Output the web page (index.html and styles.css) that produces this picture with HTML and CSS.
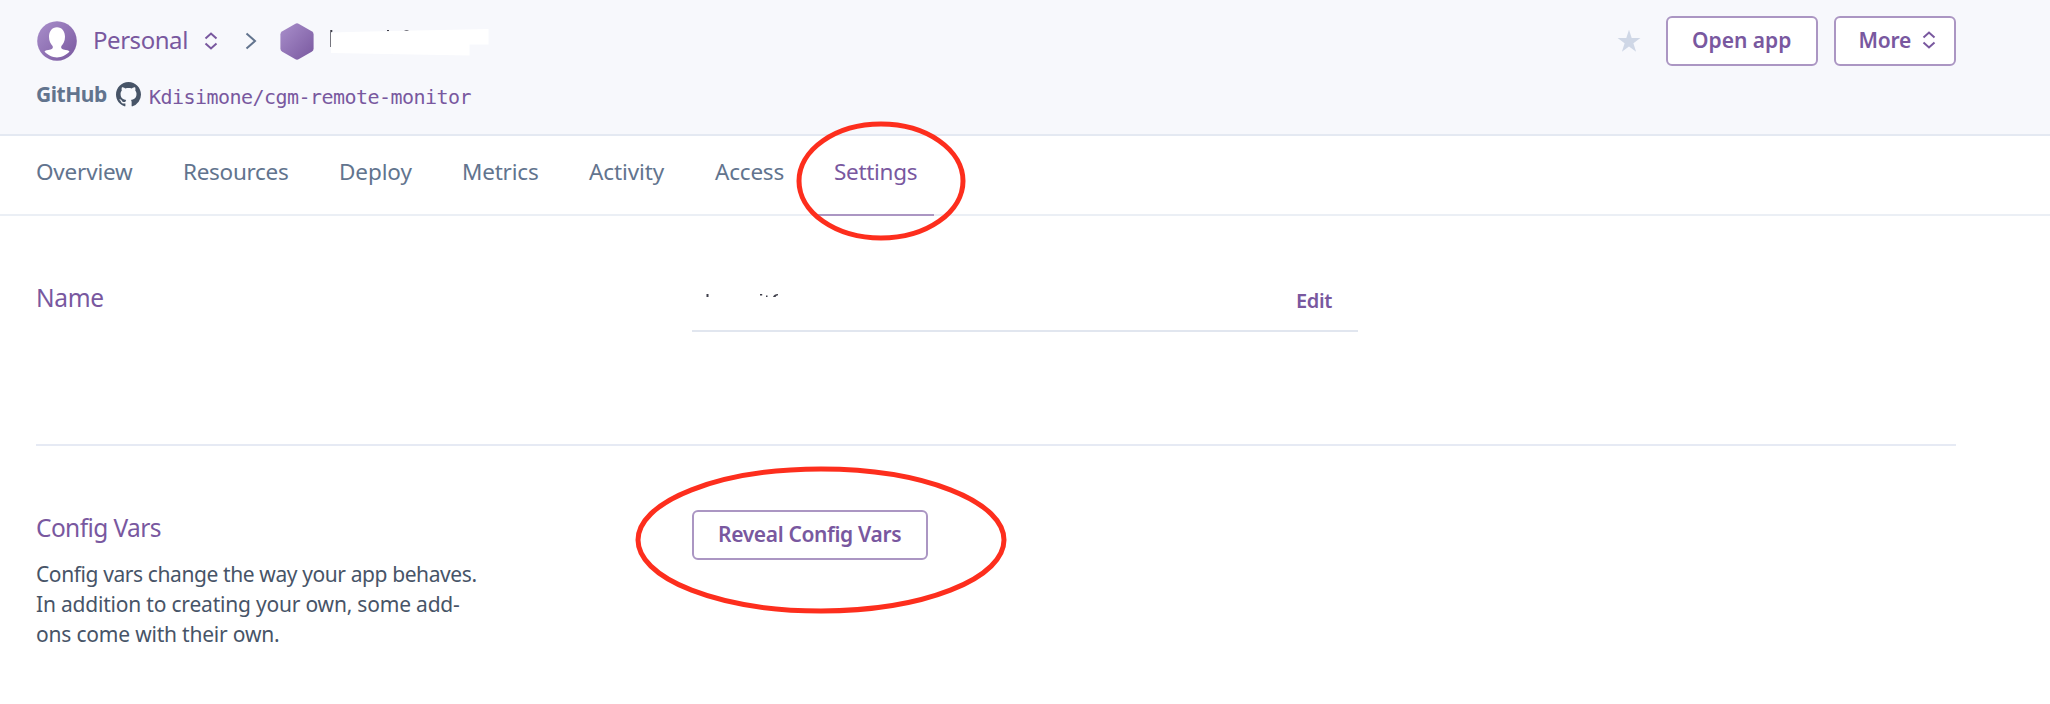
FILE: index.html
```html
<!DOCTYPE html>
<html lang="en">
<head>
<meta charset="utf-8">
<title>Settings</title>
<link rel="stylesheet" href="styles.css">
</head>
<body>
<header class="header">
  <div class="header-top">
    <svg class="avatar" width="40" height="40" viewBox="0 0 40 40">
      <defs><linearGradient id="g" x1="0" y1="0" x2="1" y2="1"><stop offset="0" stop-color="#a98fcb"/><stop offset="1" stop-color="#79589f"/></linearGradient></defs>
      <circle cx="20" cy="20" r="19.8" fill="url(#g)"/>
      <path d="M20 6.2c5 0 8 4.200 8 9.600 0 4.200-1.700 7.400-3.600 9.200-.8 1.900.2 3 2 3.500 3.500.6 5.200.9 6.100 2.100C29.800 34 24.500 36.500 20 36.500S10.200 34 7.500 30.600c.9-1.200 2.600-1.500 6.100-2.100 1.800-.5 2.800-1.600 2-3.500-1.900-1.800-3.600-5-3.600-9.200 0-5.400 3-9.600 8-9.600z" fill="#fff"/>
    </svg>
    <span class="team">Personal</span>
    <svg class="sort" width="14" height="18" viewBox="0 0 14 18"><path d="M1.500 6.500 7 1.500l5.500 5M1.500 11.500l5.500 5 5.500-5"/></svg>
    <svg class="crumb" width="12" height="18" viewBox="0 0 12 18"><path d="M1.500 1.500 10 9l-8.500 7.500"/></svg>
    <svg class="hex" width="34" height="37" viewBox="0 0 34 37"><path d="M15 .9q2-1.100 4 0l12.700 7.300q1.900 1.100 1.900 3.300v14q0 2.200-1.900 3.300L19 36.100q-2 1.100-4 0L2.300 28.800Q.4 27.700.4 25.500v-14Q.4 9.300 2.300 8.200z" fill="url(#g)"/></svg>
    <svg class="redacted" width="160" height="30" viewBox="0 0 160 30"><path d="M.3 4h2v2h-1v15h-1zM57 4h2v1.500h-2zM74 5q3-2 5 0z" fill="#3f3f4a"/><path d="M1 6.500 40 5.500 158.500 3v15.500h-19v11L1 27z" fill="#fff"/></svg>
    <div class="actions">
      <svg class="star" width="24" height="24" viewBox="0 0 24 24"><path d="M12 .8l2.700 8.300h8.700l-7 5.200 2.700 8.500-7.100-5.200-7.100 5.200 2.700-8.500-7-5.200h8.700z" fill="#cfd7e6"/></svg>
      <button class="btn open">Open app</button>
      <button class="btn more"><span>More</span><svg class="sort" width="14" height="18" viewBox="0 0 14 18"><path d="M1.500 6.500 7 1.500l5.500 5M1.500 11.500l5.500 5 5.500-5"/></svg></button>
    </div>
  </div>
  <div class="repo">
    <span class="repo-label">GitHub</span>
    <svg class="octocat" width="25" height="25" viewBox="0 0 16 16"><path fill="#475467" d="M8 0C3.580 0 0 3.580 0 8c0 3.540 2.290 6.530 5.470 7.590.4.070.55-.17.55-.38 0-.19-.01-.82-.01-1.490-2.010.37-2.530-.49-2.690-.94-.09-.23-.48-.94-.82-1.130-.28-.15-.68-.52-.01-.53.63-.01 1.080.58 1.230.82.72 1.210 1.870.87 2.330.66.07-.52.28-.87.51-1.070-1.780-.2-3.640-.89-3.640-3.950 0-.87.31-1.590.82-2.150-.08-.2-.36-1.020.08-2.120 0 0 .67-.21 2.200.82.64-.18 1.320-.27 2-.27s1.360.09 2 .27c1.530-1.040 2.200-.82 2.200-.82.44 1.100.16 1.920.08 2.120.51.56.82 1.270.82 2.150 0 3.070-1.870 3.750-3.650 3.950.29.25.54.73.54 1.480 0 1.070-.01 1.930-.01 2.200 0 .21.15.46.55.38A8.010 8.010 0 0 0 16 8c0-4.420-3.580-8-8-8z"/></svg>
    <span class="repo-name">Kdisimone/cgm-remote-monitor</span>
  </div>
</header>
<nav class="tabs">
  <a class="tab overview">Overview</a>
  <a class="tab resources">Resources</a>
  <a class="tab deploy">Deploy</a>
  <a class="tab metrics">Metrics</a>
  <a class="tab activity">Activity</a>
  <a class="tab access">Access</a>
  <a class="tab settings">Settings<svg class="ring ring-tab" width="172" height="122" viewBox="0 0 172 122"><ellipse cx="86" cy="61" rx="82" ry="57"/></svg></a>
</nav>
<main class="content">
  <section class="section section-name">
    <h2 class="heading name">Name</h2>
    <div class="field">
      <svg class="masked" width="100" height="10" viewBox="0 0 100 10"><path d="M14.500 2h2v3h-2zM68 2h2.200v1.600H68zM74 3.500h1.500V5H74zM81 5q1-3 5-3v1.300q-2 0-2.500 1.700z" fill="#3f3f4a"/></svg>
      <a class="edit">Edit</a>
    </div>
  </section>
  <section class="section section-vars">
    <div>
      <h2 class="heading vars">Config Vars</h2>
      <p class="desc"><span class="line-first">Config vars change the way your app behaves.</span><br>In addition to creating your own, some add-<br>ons come with their own.</p>
    </div>
    <div class="reveal-wrap">
      <button class="btn reveal">Reveal Config Vars</button>
      <svg class="ring ring-vars" width="374" height="150" viewBox="0 0 374 150"><ellipse cx="187" cy="75" rx="183" ry="71"/></svg>
    </div>
  </section>
</main>
</body>
</html>
```
FILE: styles.css
```css
* { box-sizing: border-box; }
body {
  margin: 0;
  height: 704px;
  overflow: hidden;
  background: #fff;
  color: #475467;
  font-family: "Noto Sans", "Open Sans", sans-serif;
  font-size: 21px;
}
.header {
  height: 136px;
  padding: 16px 94px 0 36px;
  background: #f7f8fc;
  border-bottom: 2px solid #e4e9f2;
}
.header-top { display: flex; align-items: center; height: 50px; }
.avatar { margin-left: 1px; }
.team { margin-left: 16px; padding-bottom: 4px; width: 111px; font-size: 24px; letter-spacing: -0.45px; color: #79589f; }
.sort { fill: none; stroke: #79589f; stroke-width: 2; }
.crumb { margin-left: 27px; fill: none; stroke: #62748e; stroke-width: 2; }
.hex { margin-left: 23px; }
.redacted { margin-left: 16px; }
.actions { display: flex; align-items: center; margin-left: auto; }
.star { margin-right: 25px; }
.btn {
  display: flex;
  align-items: center;
  height: 50px;
  padding: 0 0 2px 24px;
  border: 2px solid #ab96c3;
  border-radius: 6px;
  background: #fff;
  color: #79589f;
  font-family: inherit;
  font-size: 21px;
  font-weight: 600;
  white-space: nowrap;
}
.open { width: 152px; margin-right: 16px; }
.more { width: 122px; padding-left: 22.500px; padding-right: 18px; justify-content: space-between; letter-spacing: -0.2px; }
.repo { display: flex; height: 50px; padding-top: 14px; line-height: 28px; }
.repo-label { width: 80px; font-weight: 700; letter-spacing: -0.45px; color: #62748e; }
.octocat { margin-top: 2px; }
.repo-name { margin: 3px 0 0 8px; font-family: "DejaVu Sans Mono", monospace; font-size: 20px; letter-spacing: -0.54px; color: #79589f; }
.tabs {
  display: flex;
  height: 80px;
  padding-left: 18px;
  border-bottom: 2px solid #ebeff5;
}
.tab {
  position: relative;
  height: 80px;
  padding: 18px 0 0 17px;
  line-height: 36px;
  font-size: 22.500px;
  letter-spacing: -0.2px;
  color: #62748e;
}
.overview { width: 148px; padding-left: 18px; }
.resources { width: 156px; letter-spacing: -0.3px; }
.deploy { width: 123px; letter-spacing: -0.1px; }
.metrics { width: 127px; }
.activity { width: 126px; letter-spacing: -0.1px; }
.access { width: 118px; }
.settings { width: 118px; padding-left: 18px; border-bottom: 2px solid #ab96c3; letter-spacing: -0.3px; color: #79589f; }
.ring { position: absolute; fill: none; stroke: #fd2e1d; stroke-width: 5; }
.ring-tab { left: -21px; top: -16px; }
.content { padding: 0 94px 0 36px; }
.section { display: grid; grid-template-columns: 656px 666px; }
.section-name { height: 230px; padding-top: 64px; border-bottom: 2px solid #e6eaf4; }
.heading { margin: 0; line-height: 36px; font-size: 24.500px; font-weight: 400; letter-spacing: -0.3px; color: #79589f; }
.vars { letter-spacing: -0.6px; }
.field {
  display: flex;
  justify-content: space-between;
  height: 52px;
  border-bottom: 2px solid #e1e6ef;
}
.masked { margin-top: 12px; }
.edit { width: 62px; line-height: 42px; font-size: 20px; font-weight: 600; letter-spacing: -0.4px; color: #79589f; }
.section-vars { padding-top: 64px; }
.desc { margin: 13px 0 0; line-height: 30px; letter-spacing: -0.2px; white-space: nowrap; }
.line-first { letter-spacing: -0.4px; }
.reveal-wrap { position: relative; }
.reveal { width: 236px; letter-spacing: -0.35px; }
.ring-vars { left: -58px; top: -45px; }
```
